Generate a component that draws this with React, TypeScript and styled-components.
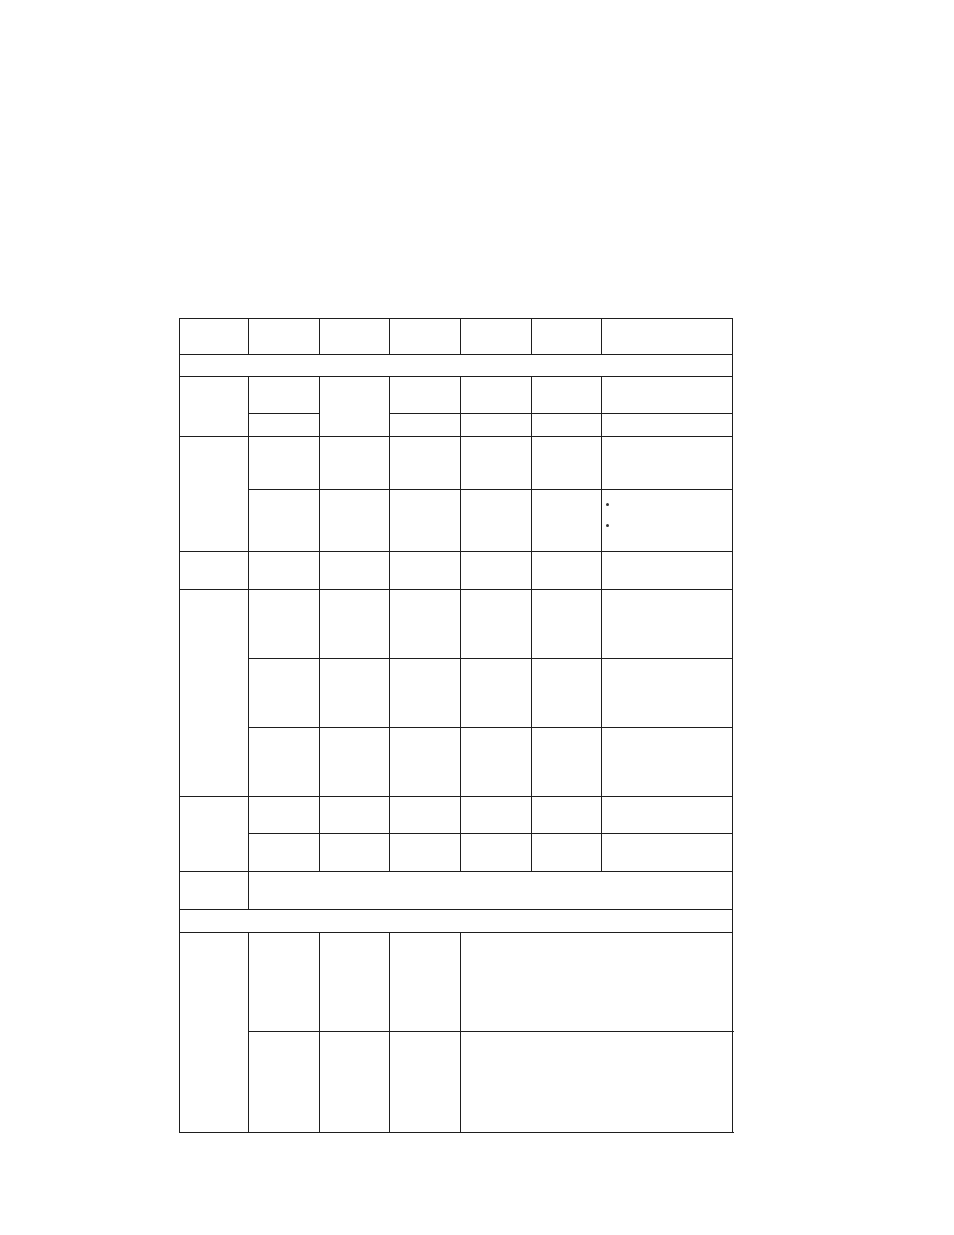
import React from 'react';
import styled, { createGlobalStyle } from 'styled-components';

const GlobalStyle = createGlobalStyle`
  html, body {
    margin: 0;
    padding: 0;
    background: #ffffff;
    font-family: "Liberation Sans", Arial, sans-serif;
  }
`;

const Page = styled.div`
  width: 954px;
  min-height: 1235px;
  box-sizing: border-box;
  padding: 318px 0 0 179px;
`;

const Grid = styled.table`
  border-collapse: collapse;
  table-layout: fixed;
  width: 553px;
  border: 1px solid #1e1e1e;
`;

const Row = styled.tr<{ $h: number }>`
  height: ${(p) => p.$h}px;
`;

const Cell = styled.td`
  border: 1px solid #1e1e1e;
  padding: 0;
  vertical-align: top;
  font-size: 10px;
`;

const Bullets = styled.ul`
  margin: 0;
  padding: 4px 0 0 4px;
  list-style: disc inside;
  font-size: 9px;
  color: #333;

  li {
    height: 21px;
    line-height: 21px;
  }
`;

const colWidths = [69, 71, 70, 71, 71, 70, 131];

const blank = (n: number, key: string) =>
  Array.from({ length: n }, (_, i) => <Cell key={`${key}-${i}`} />);

export default function App() {
  return (
    <>
      <GlobalStyle />
      <Page>
        <Grid>
          <colgroup>
            {colWidths.map((w, i) => (
              <col key={i} style={{ width: w }} />
            ))}
          </colgroup>
          <tbody>
            <Row $h={36}>{blank(7, 'r1')}</Row>
            <Row $h={22}>
              <Cell colSpan={7} />
            </Row>
            <Row $h={37}>
              <Cell rowSpan={2} />
              <Cell />
              <Cell rowSpan={2} />
              {blank(4, 'r3')}
            </Row>
            <Row $h={23}>{blank(5, 'r4')}</Row>
            <Row $h={53}>
              <Cell rowSpan={2} />
              {blank(6, 'r5')}
            </Row>
            <Row $h={62}>
              {blank(5, 'r6')}
              <Cell>
                <Bullets>
                  <li>{'\u00a0'}</li>
                  <li>{'\u00a0'}</li>
                </Bullets>
              </Cell>
            </Row>
            <Row $h={38}>{blank(7, 'r7')}</Row>
            <Row $h={69}>
              <Cell rowSpan={3} />
              {blank(6, 'r8')}
            </Row>
            <Row $h={69}>{blank(6, 'r9')}</Row>
            <Row $h={69}>{blank(6, 'r10')}</Row>
            <Row $h={37}>
              <Cell rowSpan={2} />
              {blank(6, 'r11')}
            </Row>
            <Row $h={38}>{blank(6, 'r12')}</Row>
            <Row $h={38}>
              <Cell />
              <Cell colSpan={6} />
            </Row>
            <Row $h={23}>
              <Cell colSpan={7} />
            </Row>
            <Row $h={99}>
              <Cell rowSpan={2} />
              {blank(3, 'r15')}
              <Cell colSpan={4} />
            </Row>
            <Row $h={101}>
              {blank(3, 'r16')}
              <Cell colSpan={4} />
            </Row>
          </tbody>
        </Grid>
      </Page>
    </>
  );
}
